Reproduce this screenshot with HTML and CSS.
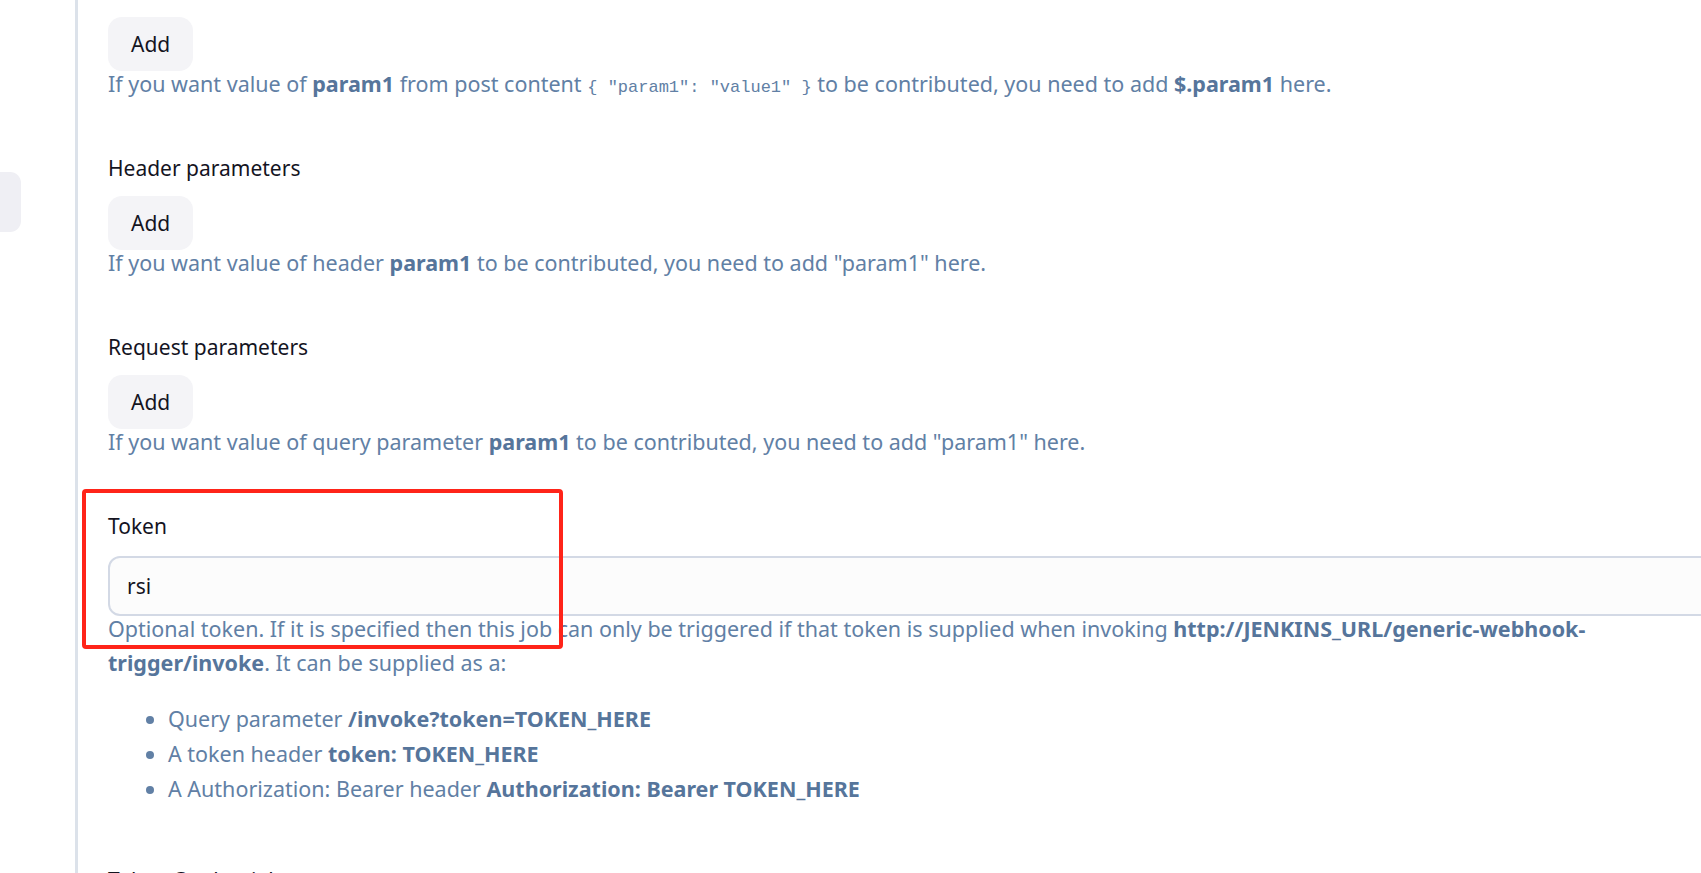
FILE: index.html
```html
<!DOCTYPE html>
<html>
  <head>
    <title>Generic Webhook Trigger</title>
    <link rel="stylesheet" href="styles.css">
  </head>
  <body>
    <div class="page">
      <div class="sidebar">
        <div class="side-item"></div>
      </div>

      <div class="main">
        <!-- Post content parameters -->
        <div class="field field-top">
          <button class="btn-add">Add</button>
          <div class="help">
            If you want value of <b>param1</b> from post content <code>{ "param1": "value1" }</code> to be contributed, you need to add <b>$.param1</b> here.
          </div>
        </div>

        <div class="field">
          <div class="label">Header parameters</div>
          <button class="btn-add">Add</button>
          <div class="help">
            If you want value of header <b>param1</b> to be contributed, you need to add "param1" here.
          </div>
        </div>

        <div class="field">
          <div class="label">Request parameters</div>
          <button class="btn-add">Add</button>
          <div class="help">
            If you want value of query parameter <b>param1</b> to be contributed, you need to add "param1" here.
          </div>
        </div>

        <!-- Token -->
        <div class="field token-field">
          <div class="highlight"></div>
          <div class="label">Token</div>
          <input class="text-input" type="text" value="rsi">
          <div class="help">
            Optional token. If it is specified then this job can only be triggered if that token is supplied when invoking <b>http://JENKINS_URL/generic-webhook-trigger/invoke</b>. It can be supplied as a:
            <ul>
              <li>Query parameter <b>/invoke?token=TOKEN_HERE</b></li>
              <li>A token header <b>token: TOKEN_HERE</b></li>
              <li>A Authorization: Bearer header <b>Authorization: Bearer TOKEN_HERE</b></li>
            </ul>
          </div>
        </div>

        <div class="field">
          <div class="label">Token Credential</div>
        </div>
      </div>
    </div>
  </body>
</html>
```

FILE: styles.css
```css
html,
body {
  margin: 0;
  height: 100%;
  overflow: hidden;
  background-color: #ffffff;
}

body {
  font-family: "Noto Sans", "Open Sans", sans-serif;
  font-size: 21px;
  color: #14141f;
}

.page {
  display: flex;
  height: 100%;
}

.sidebar {
  width: 75px;
  flex-shrink: 0;
}

.side-item {
  width: 21px;
  height: 60px;
  margin-top: 172px;
  background-color: #efeff4;
  border-radius: 0 11px 11px 0;
}

.main {
  border-left: 3px solid #dce2ea;
  padding: 17px 0 0 30px;
  width: 1607px;
  flex-shrink: 0;
}

.field {
  position: relative;
  margin-bottom: 53px;
}

.field-top {
  margin-bottom: 49px;
}

.label {
  line-height: 28px;
  margin-bottom: 14px;
}

.btn-add {
  display: block;
  height: 54px;
  padding: 0 23px;
  border: none;
  border-radius: 14px;
  background-color: #f4f4f7;
  font-family: inherit;
  font-size: 21px;
  color: #14141f;
  cursor: pointer;
}

.help {
  margin-top: -4px;
  font-size: 21.5px;
  line-height: 34px;
  color: #6180a5;
}

.help b {
  color: #56759b;
  font-weight: 700;
}

.help code {
  font-family: "Liberation Mono", monospace;
  font-size: 17px;
}

.help ul {
  margin: 21px 0 0;
  padding-left: 60px;
}

.help li {
  line-height: 35px;
}

.token-field {
  margin-bottom: 60px;
}

.token-field .label {
  margin-bottom: 16px;
}

.text-input {
  display: block;
  box-sizing: border-box;
  width: 100%;
  height: 60px;
  padding: 0 17px;
  border: 2px solid #d3d9e5;
  border-radius: 12px;
  background-color: #fcfcfc;
  font-family: inherit;
  font-size: 21px;
  color: #14141f;
}

.text-input:focus {
  outline: none;
}

/* annotation box drawn over the token field */
.highlight {
  position: absolute;
  top: -23px;
  left: -26px;
  width: 481px;
  height: 160px;
  box-sizing: border-box;
  border: 4px solid #ff2419;
  border-radius: 4px;
  pointer-events: none;
}
```
